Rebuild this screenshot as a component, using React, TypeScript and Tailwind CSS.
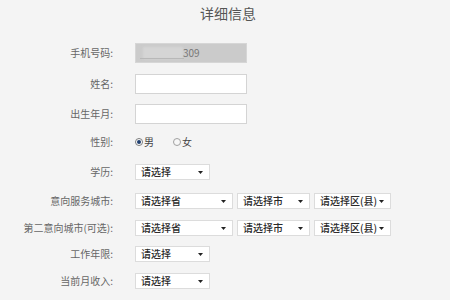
const font = { fontFamily: '"Microsoft YaHei", "Noto Sans CJK SC", sans-serif' }

const Arrow = () => (
  <svg width="5" height="3" viewBox="0 0 5 3" className="shrink-0">
    <path d="M0 0 L5 0 L2.5 3 Z" fill="#222" />
  </svg>
)

const Select = ({ text, w }: { text: string; w: string }) => (
  <div
    className={`${w} h-[16px] flex items-center justify-between bg-white border border-[#dcdcdc] pl-[5px] pr-[6px] text-[10px] font-medium text-[#2a2a2a]`}
  >
    <span className="leading-none">{text}</span>
    <Arrow />
  </div>
)

const Row = ({
  label,
  mt,
  h,
  children
}: {
  label: string
  mt: string
  h: string
  children: React.ReactNode
}) => (
  <div className={`flex items-center ${mt} ${h}`}>
    <div className="w-[114px] text-right text-[10px] text-[#666] leading-none pr-[1px]">{label}</div>
    <div className="ml-[21px] flex items-center gap-[4px] h-full">{children}</div>
  </div>
)

const App = () => {
  return (
    <div className="w-[450px] h-[300px] bg-[#f4f4f4] overflow-hidden" style={font}>
      <div className="h-[26px] pt-[4px] text-center pl-[6px] text-[14px] text-[#555] leading-[18px]">
        详细信息
      </div>

      <Row label="手机号码:" mt="mt-[17px]" h="h-[20px]">
        <div className="relative w-[112px] h-[20px] bg-[#cbcbcb] border border-[#d6d6d6] flex items-center">
          <div className="absolute left-[7px] top-[3px] w-[40px] h-[12px] bg-[#d5d5d5] blur-[1px]" />
          <div className="absolute left-[4px] top-[14px] w-[44px] h-[1px] bg-[#b8b8b8] blur-[0.5px]" />
          <span className="absolute left-[47px] text-[10px] text-[#777] leading-none">309</span>
        </div>
      </Row>

      <Row label="姓名:" mt="mt-[11px]" h="h-[20px]">
        <div className="w-[112px] h-[20px] bg-white border border-[#d4d4d4]" />
      </Row>

      <Row label="出生年月:" mt="mt-[10px]" h="h-[20px]">
        <div className="w-[112px] h-[20px] bg-white border border-[#d4d4d4]" />
      </Row>

      <Row label="性别:" mt="mt-[10px]" h="h-[16px]">
        <div className="flex items-center text-[10px] text-[#444] leading-none">
          <span className="w-[8px] h-[8px] rounded-full border border-[#7a7a7a] bg-white flex items-center justify-center">
            <span className="w-[4px] h-[4px] rounded-full bg-[#1f3f6f]" />
          </span>
          <span className="ml-[1px]">男</span>
          <span className="ml-[19px] w-[8px] h-[8px] rounded-full border border-[#a0a0a0] bg-[#f7f7f7]" />
          <span className="ml-[1px]">女</span>
        </div>
      </Row>

      <Row label="学历:" mt="mt-[14px]" h="h-[16px]">
        <Select text="请选择" w="w-[75px]" />
      </Row>

      <Row label="意向服务城市:" mt="mt-[13px]" h="h-[16px]">
        <Select text="请选择省" w="w-[98px]" />
        <Select text="请选择市" w="w-[73px]" />
        <Select text="请选择区(县)" w="w-[77px]" />
      </Row>

      <Row label="第二意向城市(可选):" mt="mt-[11px]" h="h-[16px]">
        <Select text="请选择省" w="w-[98px]" />
        <Select text="请选择市" w="w-[73px]" />
        <Select text="请选择区(县)" w="w-[77px]" />
      </Row>

      <Row label="工作年限:" mt="mt-[10px]" h="h-[16px]">
        <Select text="请选择" w="w-[75px]" />
      </Row>

      <Row label="当前月收入:" mt="mt-[11px]" h="h-[16px]">
        <Select text="请选择" w="w-[75px]" />
      </Row>
    </div>
  )
}

export default App
